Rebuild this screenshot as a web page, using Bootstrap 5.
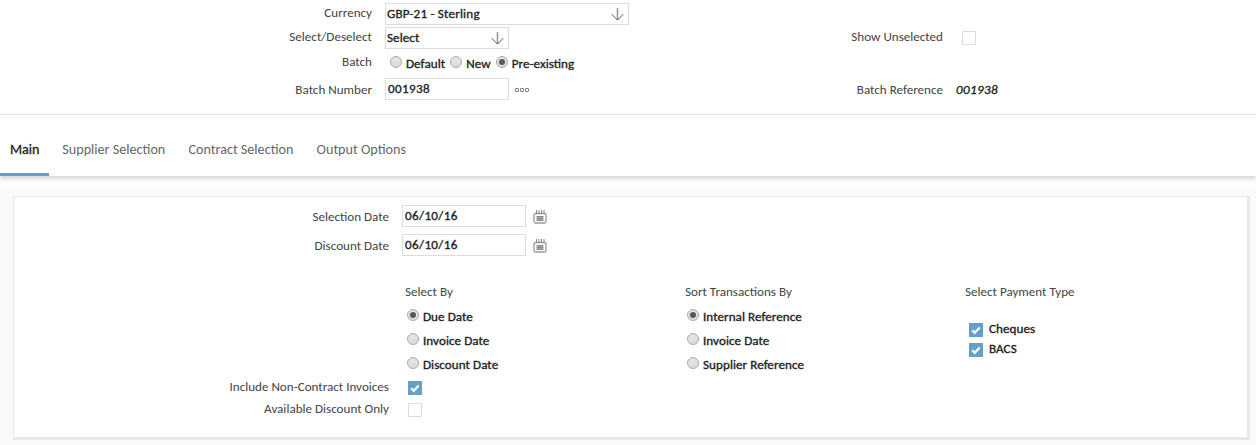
<!DOCTYPE html>
<html lang="en">
<head>
<meta charset="utf-8">
<meta name="viewport" content="width=device-width, initial-scale=1">
<title>Payment selection</title>
<link href="https://cdn.jsdelivr.net/npm/bootstrap@5.3.0/dist/css/bootstrap.min.css" rel="stylesheet">
<style>
body{font-family:Carlito,Lato,sans-serif;font-size:13.1px;line-height:16px;color:#444;background:#fafafa;overflow:hidden;height:445px}
.top-form{height:114px;padding-top:3px}
.line{display:flex;height:22px;align-items:center}
.lbl{text-align:right;flex:none;white-space:nowrap}
.w-top{width:372px;margin-right:13px}
.w-right{width:434px}
.w-panel{width:375px;margin-right:13px}
.up{margin-top:-2px}
.down{padding-top:2px}
.val,.box{color:#222;-webkit-text-stroke:.34px #222;letter-spacing:.06px;font-feature-settings:"liga" 1}
.box{border:1px solid #dcdcdc;background:#fff;height:22px;width:124px;display:flex;align-items:center;justify-content:space-between;padding:0 4px 0 1px;flex:none}
.box.wide{width:244px}
.box.wide span{letter-spacing:.2px}
.box.num{padding-left:2px}
.num{letter-spacing:.35px}
.radio{width:12px;height:12px;border-radius:50%;border:1px solid #a9a9a9;background:linear-gradient(#e6e6e6,#dadada);flex:none;display:flex;align-items:center;justify-content:center;margin-right:4px}
.radio.on::after{content:"";width:6px;height:6px;border-radius:50%;background:#5a5a5a}
.line>.radio{margin-left:5px}
.tick{width:14px;height:14px;border:1px solid #dcdcdc;background:#fff;flex:none;display:block}
.tick.on{border:0;background:#65a1c6}
.tick svg{display:block}
.dots{margin-left:6px;margin-right:-20px;margin-top:1px}
.cal{margin-left:6.5px;margin-top:2px}
.tabs{height:62px;background:#fff;border-top:1px solid #e6e6e6;font-size:14.15px;position:relative;z-index:1;box-shadow:0 3px 5px rgba(0,0,0,.17)}
.tabs .nav-link{padding:27px 0 0;color:#666;height:61px;line-height:16px;margin-right:23.2px;white-space:nowrap}
.tabs .nav-link.active{color:#222;-webkit-text-stroke:.34px #222;padding-left:10px;width:49px;border-bottom:3px solid #65a1c6;margin-right:13.3px}
.strip{height:10px;background:#fff}
.panel{margin:10px 6px 0 13px;height:244px;background:#fff;border:1px solid #e7e7e7;border-right-width:3px;border-bottom-width:3px;padding-top:8px}
.opts{height:93px;margin-top:28px;padding-left:391px}
.opts>div{width:280px}
.opt{display:flex;height:24px;align-items:center;padding-left:2px}
.first{margin-top:3px}
.opt .val{padding-top:3px}
.pay{height:20px;padding-left:4px;gap:6px}
.pay .val{padding:0;margin-top:-2px}
.pay-first{margin-top:20px}
.low .tick{margin-left:6px}
</style>
</head>
<body>
<section class="top-form bg-white">
  <div class="line"><div class="lbl w-top up">Currency</div><div class="box wide"><span>GBP-21 - Sterling</span><svg width="13" height="14" fill="none"><path d="M6.5 1v12" stroke="#999" stroke-width="1.6"/><path d="M.7 7.2l5.8 5.8 5.8-5.8" stroke="#555"/></svg></div></div>
  <div class="line" style="margin-top:2px"><div class="lbl w-top up">Select/Deselect</div><div class="box"><span>Select</span><svg width="13" height="14" fill="none"><path d="M6.5 1v12" stroke="#999" stroke-width="1.6"/><path d="M.7 7.2l5.8 5.8 5.8-5.8" stroke="#555"/></svg></div>
    <div class="lbl w-right up" style="margin-right:19px">Show Unselected</div><span class="tick"></span></div>
  <div class="line" style="margin-top:2px"><div class="lbl w-top">Batch</div>
    <span class="radio"></span><span class="val pt-1">Default</span><span class="radio"></span><span class="val pt-1">New</span><span class="radio on"></span><span class="val pt-1">Pre-existing</span></div>
  <div class="line" style="margin-top:5px"><div class="lbl w-top down">Batch Number</div><div class="box num">001938</div>
    <svg class="dots" width="14" height="4" fill="none" stroke="#808080"><rect x=".5" y=".5" width="3" height="3" rx=".3"/><rect x="5.5" y=".5" width="3" height="3" rx=".3"/><rect x="10.5" y=".5" width="3" height="3" rx=".3"/></svg>
    <div class="lbl w-right down" style="margin-right:13px">Batch Reference</div><i class="val num down">001938</i></div>
</section>
<nav class="tabs nav flex-nowrap"><a class="nav-link active">Main</a><a class="nav-link">Supplier Selection</a><a class="nav-link">Contract Selection</a><a class="nav-link">Output Options</a></nav>
<div class="strip"></div>
<main class="panel">
  <div class="line"><div class="lbl w-panel down">Selection Date</div><div class="box num">06/10/16</div>
    <svg class="cal" width="14" height="14" fill="none" stroke="#999"><rect x="1" y="3.5" width="12" height="9.5" rx="1.5" stroke-width="1.3"/><path d="M3.5 0v4M6 0v4M8.5 0v4M11 0v4" stroke="#888"/><path d="M3.5 6.5h7M3.5 8.5h7M3.5 10.5h7" stroke="#888"/><path d="M3.5 7.5h7M3.5 9.5h7" stroke="#aaa"/></svg></div>
  <div class="line" style="margin-top:7px"><div class="lbl w-panel down">Discount Date</div><div class="box num">06/10/16</div>
    <svg class="cal" width="14" height="14" fill="none" stroke="#999"><rect x="1" y="3.5" width="12" height="9.5" rx="1.5" stroke-width="1.3"/><path d="M3.5 0v4M6 0v4M8.5 0v4M11 0v4" stroke="#888"/><path d="M3.5 6.5h7M3.5 8.5h7M3.5 10.5h7" stroke="#888"/><path d="M3.5 7.5h7M3.5 9.5h7" stroke="#aaa"/></svg></div>
  <div class="opts d-flex">
    <div>Select By
      <div class="opt first"><span class="radio on"></span><span class="val">Due Date</span></div>
      <div class="opt"><span class="radio"></span><span class="val">Invoice Date</span></div>
      <div class="opt"><span class="radio"></span><span class="val">Discount Date</span></div></div>
    <div>Sort Transactions By
      <div class="opt first"><span class="radio on"></span><span class="val">Internal Reference</span></div>
      <div class="opt"><span class="radio"></span><span class="val">Invoice Date</span></div>
      <div class="opt"><span class="radio"></span><span class="val">Supplier Reference</span></div></div>
    <div>Select Payment Type
      <div class="opt pay pay-first"><span class="tick on"><svg width="14" height="14" fill="none" stroke="#fff" stroke-width="2.3"><path d="M3.2 7.3l2.5 2.5 5-5.3"/></svg></span><span class="val">Cheques</span></div>
      <div class="opt pay"><span class="tick on"><svg width="14" height="14" fill="none" stroke="#fff" stroke-width="2.3"><path d="M3.2 7.3l2.5 2.5 5-5.3"/></svg></span><span class="val">BACS</span></div></div>
  </div>
  <div class="line low"><div class="lbl w-panel up">Include Non-Contract Invoices</div><span class="tick on"><svg width="14" height="14" fill="none" stroke="#fff" stroke-width="2.3"><path d="M3.2 7.3l2.5 2.5 5-5.3"/></svg></span></div>
  <div class="line low"><div class="lbl w-panel up">Available Discount Only</div><span class="tick"></span></div>
</main>
<script src="https://cdn.jsdelivr.net/npm/bootstrap@5.3.0/dist/js/bootstrap.bundle.min.js"></script>
</body>
</html>
